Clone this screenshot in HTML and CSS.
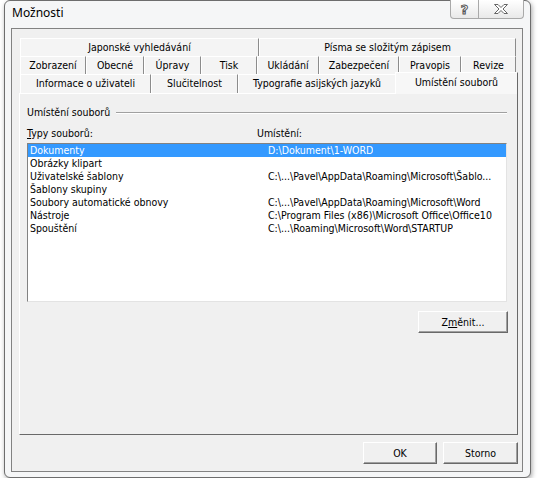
FILE: index.html
```html
<!DOCTYPE html>
<html lang="cs">
<head>
    <meta charset="UTF-8">
    <title>Možnosti</title>
    <link rel="stylesheet" href="styles.css">
</head>
<body>

<!-- Dialog window -->
<div class="window">
    <div class="titlebar">
        <span class="title">Možnosti</span>
        <div class="caption-buttons">
            <span class="caption-btn help">?</span>
            <span class="caption-btn close">
                <svg width="14" height="10" viewBox="0 0 14 10">
                    <polygon points="0.5,0.5 4,0.5 7,3.5 10,0.5 13.5,0.5 9,5 13.5,9.5 10,9.5 7,6.5 4,9.5 0.5,9.5 5,5" fill="#fff" stroke="#666" stroke-width="1"/>
                </svg>
            </span>
        </div>
    </div>

    <div class="client">
        <!-- Tab rows -->
        <div class="tabs">
            <div class="tab-row row-1">
                <span class="tab">Japonské vyhledávání</span>
                <span class="tab">Písma se složitým zápisem</span>
            </div>
            <div class="tab-row row-2">
                <span class="tab">Zobrazení</span>
                <span class="tab">Obecné</span>
                <span class="tab">Úpravy</span>
                <span class="tab">Tisk</span>
                <span class="tab">Ukládání</span>
                <span class="tab">Zabezpečení</span>
                <span class="tab">Pravopis</span>
                <span class="tab">Revize</span>
            </div>
            <div class="tab-row row-3">
                <span class="tab">Informace o uživateli</span>
                <span class="tab">Slučitelnost</span>
                <span class="tab">Typografie asijských jazyků</span>
                <span class="tab active">Umístění souborů</span>
            </div>
        </div>

        <!-- Tab page -->
        <div class="panel">
            <div class="group-title">Umístění souborů</div>
            <div class="list-labels">
                <span class="col-type"><u>T</u>ypy souborů:</span>
                <span>Umístění:</span>
            </div>
            <div class="listbox">
                <div class="list-item selected"><span class="item-name">Dokumenty</span><span class="item-path">D:\Dokument\1-WORD</span></div>
                <div class="list-item"><span class="item-name">Obrázky klipart</span><span class="item-path"></span></div>
                <div class="list-item"><span class="item-name">Uživatelské šablony</span><span class="item-path">C:\...\Pavel\AppData\Roaming\Microsoft\Šablo...</span></div>
                <div class="list-item"><span class="item-name">Šablony skupiny</span><span class="item-path"></span></div>
                <div class="list-item"><span class="item-name">Soubory automatické obnovy</span><span class="item-path">C:\...\Pavel\AppData\Roaming\Microsoft\Word</span></div>
                <div class="list-item"><span class="item-name">Nástroje</span><span class="item-path">C:\Program Files (x86)\Microsoft Office\Office10</span></div>
                <div class="list-item"><span class="item-name">Spouštění</span><span class="item-path">C:\...\Roaming\Microsoft\Word\STARTUP</span></div>
            </div>
            <div class="panel-actions">
                <button class="btn btn-change">Z<u>m</u>ěnit...</button>
            </div>
        </div>

        <!-- OK / Storno -->
        <div class="dialog-buttons">
            <button class="btn btn-ok">OK</button>
            <button class="btn btn-cancel">Storno</button>
        </div>
    </div>
</div>

</body>
</html>
```

FILE: styles.css
```css
body {
    margin: 0;
    background-color: #fff;
    font-family: "DejaVu Sans Condensed", "Liberation Sans", sans-serif;
    font-size: 10.5px;
    color: #000;
}

/* Window frame */
.window {
    margin-left: 4px;
    width: 527px;
    height: 478px;
    box-sizing: border-box;
    border: 1px solid #6d6d6d;
    border-radius: 6px;
    background-color: #f5f6f7;
    box-shadow: 1px 2px 5px rgba(0, 0, 0, 0.35);
    display: flex;
    flex-direction: column;
}

.titlebar {
    height: 27px;
    flex: none;
    display: flex;
    justify-content: space-between;
    align-items: flex-start;
    padding: 0 6px 0 7px;
}

.title {
    font-family: "Noto Sans", "Open Sans", sans-serif;
    font-size: 12px;
    line-height: 23px;
}

.caption-buttons {
    display: flex;
    margin-top: -1px;
    border: 1px solid #a9a9a9;
    border-top: none;
    border-radius: 0 0 4px 4px;
    background: linear-gradient(#ffffff, #e9e9e9);
    overflow: hidden;
}

.caption-btn {
    height: 18px;
    display: flex;
    align-items: center;
    justify-content: center;
}

.help {
    width: 27px;
    border-right: 1px solid #a9a9a9;
    font-family: "DejaVu Sans", sans-serif;
    font-weight: bold;
    font-size: 13px;
    color: #fff;
    -webkit-text-stroke: 1px #555;
}

.close {
    width: 44px;
}

/* Client area */
.client {
    flex: 1;
    margin: 0 7px 5px 6px;
    border: 1px solid #828282;
    background-color: #f0f0f0;
    padding: 9px 4px 7px 7px;
    display: flex;
    flex-direction: column;
}

/* Tabs */
.tabs {
    padding: 0 2px 0 1px;
}

.tab-row {
    display: grid;
    height: 18px;
}

.row-1 {
    grid-template-columns: 239px 257px;
}

.row-2 {
    grid-template-columns: 66px 58px 57px 56px 62px 80px 62px 55px;
}

.row-3 {
    height: 19px;
    grid-template-columns: 131px 87px 158px 121px;
}

.tab {
    box-sizing: border-box;
    border-top: 1px solid #fff;
    border-left: 1px solid #fff;
    border-right: 1px solid #8c8c8c;
    background-color: #f4f4f4;
    text-align: center;
    line-height: 16px;
    white-space: nowrap;
}

.row-3 .tab {
    line-height: 17px;
}

.row-3 .tab.active {
    position: relative;
    z-index: 1;
    margin: -2px -1px -1px -1px;
    background-color: #f7f7f7;
    border-right-color: #696969;
    line-height: 19px;
}

/* Tab page */
.panel {
    height: 342px;
    box-sizing: border-box;
    border: 1px solid;
    border-color: #fff #696969 #696969 #fff;
    padding: 12px 10px 0 7px;
    display: flex;
    flex-direction: column;
}

.group-title {
    display: flex;
    align-items: center;
    line-height: 13px;
}

.group-title::after {
    content: "";
    flex: 1;
    margin-left: 6px;
    border-top: 1px solid #a0a0a0;
    border-bottom: 1px solid #fff;
}

.list-labels {
    display: flex;
    margin-top: 8px;
    line-height: 13px;
}

.col-type {
    width: 230px;
}

.listbox {
    margin-top: 3px;
    height: 159px;
    box-sizing: border-box;
    background-color: #fff;
    border: 1px solid;
    border-color: #828282 #e3e3e3 #e3e3e3 #828282;
    overflow: hidden;
}

.list-item {
    display: flex;
    height: 13px;
    line-height: 13px;
    padding-left: 2px;
    white-space: nowrap;
}

.list-item.selected {
    background-color: #3399ff;
    color: #fff;
}

.item-name {
    width: 238px;
    flex: none;
}

.item-path {
    overflow: hidden;
}

.panel-actions {
    display: flex;
    justify-content: flex-end;
    margin-top: 9px;
    margin-right: -1px;
}

/* Buttons */
.btn {
    box-sizing: border-box;
    height: 22px;
    padding: 0;
    font: inherit;
    color: #000;
    background-color: #f0f0f0;
    border: 1px solid;
    border-color: #fff #696969 #696969 #fff;
    box-shadow: inset -1px -1px 0 #a0a0a0;
}

.btn-change {
    width: 90px;
}

.dialog-buttons {
    display: flex;
    justify-content: flex-end;
    gap: 6px;
    margin-top: 7px;
}

.btn-ok {
    width: 74px;
}

.btn-cancel {
    width: 75px;
}
```
